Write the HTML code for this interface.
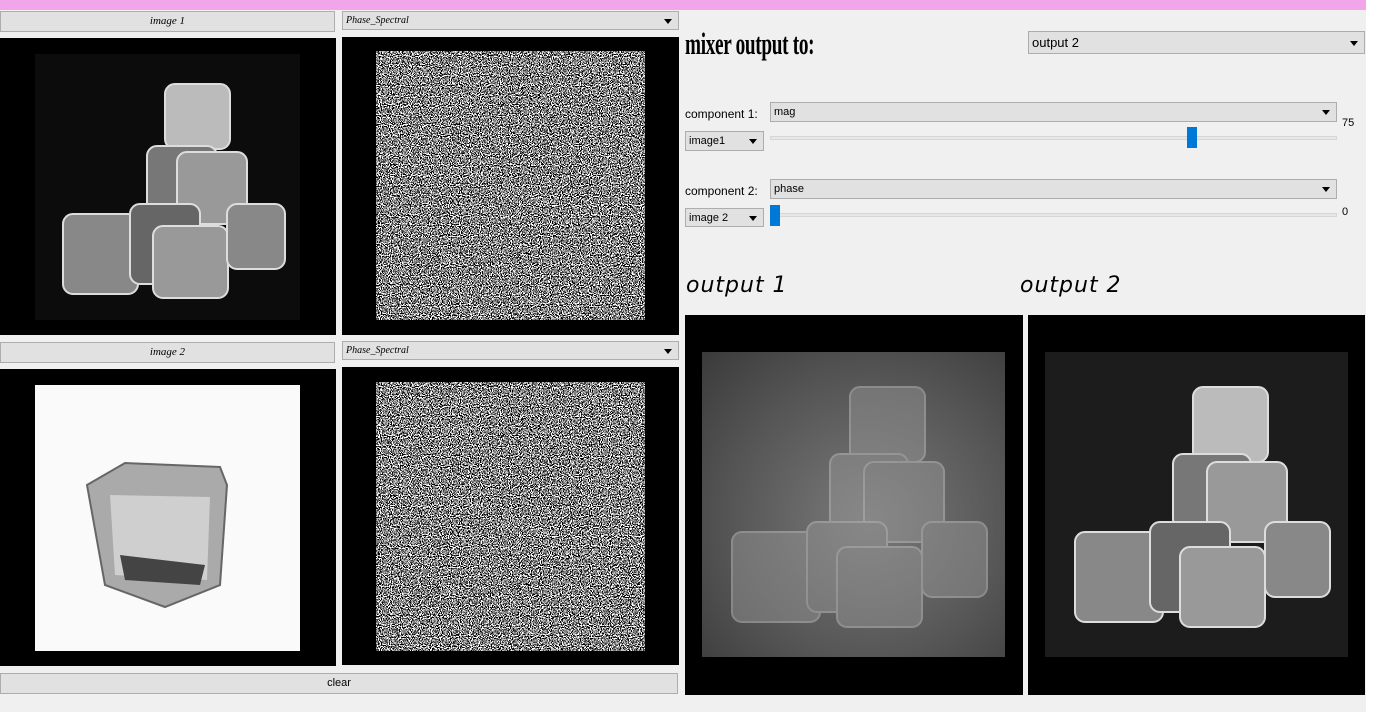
<!DOCTYPE html>
<html><head><meta charset="utf-8"><style>
*{margin:0;padding:0;box-sizing:border-box}
body{width:1380px;height:712px;background:#fff;position:relative;overflow:hidden;font-family:"Liberation Sans",sans-serif}
.win{position:absolute;left:0;top:0;width:1366px;height:712px;background:#f0f0f0}
.title{position:absolute;left:0;top:0;width:1366px;height:10px;background:#f1a6ea}
.a{position:absolute}
.btn{position:absolute;background:#e1e1e1;border:1px solid #adadad;font-family:"Liberation Serif",serif;font-style:italic;font-size:11px;text-align:center;line-height:19px;color:#000}
.cb{position:absolute;background:#e1e1e1;border:1px solid #adadad;font-size:11px;padding-left:3px;color:#000}
.cb:after{content:"";position:absolute;right:6px;top:50%;margin-top:-2px;border-left:4px solid transparent;border-right:4px solid transparent;border-top:5px solid #000}
.blk{position:absolute;background:#000}
.lbl{position:absolute;font-size:12px;color:#000}
.track{position:absolute;height:4px;background:#e7e7e7;border:1px solid #d6d6d6}
.h{position:absolute;width:10px;height:21px;background:#0078d7}
.out{position:absolute;font-family:"DejaVu Sans",sans-serif;font-style:italic;font-size:22px;letter-spacing:1px}
</style></head><body>
<div class="win">
<div class="title"></div>
<svg width="0" height="0" style="position:absolute"><defs>
<filter id="nz" x="0" y="0" width="100%" height="100%"><feTurbulence type="fractalNoise" baseFrequency="0.9" numOctaves="1" seed="3"/><feColorMatrix type="matrix" values="0 0 0 1 0 0 0 0 1 0 0 0 0 1 0 0 0 0 0 1"/><feComponentTransfer><feFuncR type="discrete" tableValues="0 1"/><feFuncG type="discrete" tableValues="0 1"/><feFuncB type="discrete" tableValues="0 1"/><feFuncA type="linear" slope="0" intercept="1"/></feComponentTransfer></filter>
</defs></svg>

<div class="btn" style="left:0;top:11px;width:335px;height:21px">image 1</div>
<div class="cb" style="left:342px;top:11px;width:337px;height:19px;font-family:'Liberation Serif',serif;font-style:italic;font-size:10px;line-height:17px">Phase_Spectral</div>
<div class="blk" style="left:0;top:38px;width:336px;height:297px"></div>
<div class="a" style="left:35px;top:54px;width:265px;height:266px;background:#0c0c0c"></div>
<svg class="a" style="left:35px;top:54px" width="265" height="266">
<g fill="#9a9a9a" stroke="#ddd" stroke-width="2">
<rect x="130" y="30" width="65" height="65" rx="10" fill="#bbb"/>
<rect x="112" y="92" width="70" height="68" rx="10" fill="#777"/>
<rect x="142" y="98" width="70" height="72" rx="10" fill="#999"/>
<rect x="28" y="160" width="75" height="80" rx="10" fill="#888"/>
<rect x="95" y="150" width="70" height="80" rx="10" fill="#666"/>
<rect x="118" y="172" width="75" height="72" rx="10" fill="#999"/>
<rect x="192" y="150" width="58" height="65" rx="10" fill="#888"/>
</g></svg>
<div class="blk" style="left:342px;top:37px;width:337px;height:298px"></div>
<svg class="a" style="left:376px;top:51px" width="269" height="269"><rect width="269" height="269" filter="url(#nz)"/></svg>

<div class="btn" style="left:0;top:342px;width:335px;height:21px">image 2</div>
<div class="cb" style="left:342px;top:341px;width:337px;height:19px;font-family:'Liberation Serif',serif;font-style:italic;font-size:10px;line-height:17px">Phase_Spectral</div>
<div class="blk" style="left:0;top:369px;width:336px;height:297px"></div>
<div class="a" style="left:35px;top:385px;width:265px;height:266px;background:#fafafa"></div>
<svg class="a" style="left:35px;top:385px" width="265" height="266">
<path d="M52 100 L90 78 L185 82 L192 100 L185 200 L130 222 L70 200 Z" fill="#aaa" stroke="#666" stroke-width="2"/>
<path d="M75 110 L175 112 L172 195 L80 190 Z" fill="#cfcfcf"/>
<path d="M85 170 L170 180 L165 200 L90 195 Z" fill="#444"/>
</svg>
<div class="blk" style="left:342px;top:367px;width:337px;height:298px"></div>
<svg class="a" style="left:376px;top:382px" width="269" height="269"><rect width="269" height="269" filter="url(#nz)"/></svg>

<div class="btn" style="left:0;top:673px;width:678px;height:21px;font-family:'Liberation Sans',sans-serif;font-style:normal;font-size:11px">clear</div>

<div class="a" style="left:685px;top:26px;font-family:'Liberation Serif',serif;font-size:31px;font-weight:bold;transform:scaleX(0.62);transform-origin:left top;letter-spacing:-0.5px">mixer output to:</div>
<div class="cb" style="left:1028px;top:31px;width:337px;height:23px;font-size:13px;line-height:21px">output 2</div>

<div class="lbl" style="left:685px;top:107px">component 1:</div>
<div class="cb" style="left:770px;top:102px;width:567px;height:20px;line-height:18px">mag</div>
<div class="lbl" style="left:1342px;top:117px;font-size:11px">75</div>
<div class="cb" style="left:685px;top:131px;width:79px;height:20px;line-height:19px">image1</div>
<div class="track" style="left:770px;top:136px;width:567px"></div>
<div class="h" style="left:1187px;top:127px"></div>

<div class="lbl" style="left:685px;top:184px">component 2:</div>
<div class="cb" style="left:770px;top:179px;width:567px;height:20px;line-height:19px">phase</div>
<div class="lbl" style="left:1342px;top:206px;font-size:11px">0</div>
<div class="cb" style="left:685px;top:208px;width:79px;height:19px;line-height:18px">image 2</div>
<div class="track" style="left:770px;top:213px;width:567px"></div>
<div class="h" style="left:770px;top:205px"></div>

<div class="out" style="left:686px;top:273px">output 1</div>
<div class="out" style="left:1020px;top:273px">output 2</div>

<div class="blk" style="left:685px;top:315px;width:338px;height:380px"></div>
<div class="a" style="left:702px;top:352px;width:303px;height:305px;background:radial-gradient(ellipse at 55% 55%,#7a7a7a,#555 60%,#3a3a3a)"></div>
<svg class="a" style="left:702px;top:352px;opacity:0.45" width="303" height="305">
<g stroke="#ccc" stroke-width="2" fill="#999">
<rect x="148" y="35" width="75" height="75" rx="10"/>
<rect x="128" y="102" width="78" height="75" rx="10"/>
<rect x="162" y="110" width="80" height="80" rx="10"/>
<rect x="30" y="180" width="88" height="90" rx="10"/>
<rect x="105" y="170" width="80" height="90" rx="10"/>
<rect x="135" y="195" width="85" height="80" rx="10"/>
<rect x="220" y="170" width="65" height="75" rx="10"/>
</g></svg>
<div class="blk" style="left:1028px;top:315px;width:337px;height:380px"></div>
<div class="a" style="left:1045px;top:352px;width:303px;height:305px;background:#1c1c1c"></div>
<svg class="a" style="left:1045px;top:352px" width="303" height="305">
<g stroke="#ddd" stroke-width="2">
<rect x="148" y="35" width="75" height="75" rx="10" fill="#bbb"/>
<rect x="128" y="102" width="78" height="75" rx="10" fill="#777"/>
<rect x="162" y="110" width="80" height="80" rx="10" fill="#999"/>
<rect x="30" y="180" width="88" height="90" rx="10" fill="#888"/>
<rect x="105" y="170" width="80" height="90" rx="10" fill="#666"/>
<rect x="135" y="195" width="85" height="80" rx="10" fill="#999"/>
<rect x="220" y="170" width="65" height="75" rx="10" fill="#888"/>
</g></svg>
</div>
</body></html>
